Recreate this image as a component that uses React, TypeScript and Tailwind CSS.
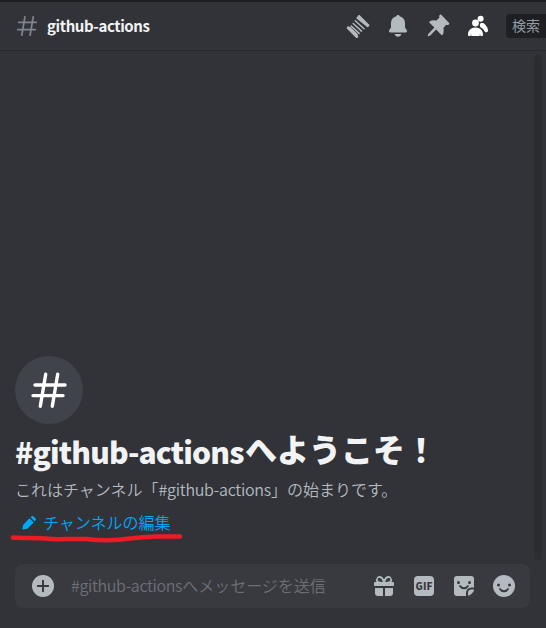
import React from "react";

const ICON = "#b5bac1";

function ThreadIcon() {
  return (
    <svg width="24" height="24" viewBox="0 0 24 24">
      <path d="M10.200 4.300 12 1.700c.4-.8 1.300-.9 2-.2l9 9c.7.700.6 1.600-.2 2l-1.400.800L10.200 4.300z" fill={ICON} />
      <path d="M1.100 13.100c.3-.7.700-.9 1.400-.6l2 .5 7.100 7.100.6 2.300c.2.600 0 1-.6 1.300-.7.400-1.300.3-1.900-.3L1.300 15c-.6-.6-.6-1.200-.2-1.900z" fill={ICON} />
      <path d="M9.300 6.700l8.700 8M7.200 9.500l8.300 7.600M5.100 12l8 7.400" stroke={ICON} strokeWidth="1.500" strokeLinecap="round" fill="none" />
    </svg>
  );
}

function BellIcon() {
  return (
    <svg width="24" height="24" viewBox="0 0 24 24" fill={ICON}>
      <path d="M12 1c-.9 0-1.500.6-1.700 1.300C6.900 3.200 5 5.800 5 9v4.500L3.300 16c-.7 1.100-.2 2.500 1.100 2.500h15.200c1.300 0 1.800-1.400 1.100-2.500L19 13.500V9c0-3.200-1.900-5.800-5.300-6.700C13.500 1.600 12.900 1 12 1z" />
      <path d="M9.200 20h5.600c.4 0 .6.300.4.700a3.600 3.600 0 0 1-6.400 0c-.2-.4 0-.7.4-.7z" />
    </svg>
  );
}

function PinIcon() {
  return (
    <svg width="24" height="24" viewBox="0 0 24 24" fill={ICON}>
      <path d="M13.700 1c.6-.6 1.300-.5 1.800.1l7.400 7.700c.6.500.6 1.200 0 1.700-.8.600-1.800.6-2.800.3l-2.700 3.200c.5 2.300.5 4.600-.6 6.500-.4.700-1.100.700-1.600.2L10.100 15.600l-5.600 5.700c-.6.5-1.800.9-2.300.9-.4 0-.5-.2-.4-.6.200-.8.500-1.700 1.100-2.300l5.500-5.700-4.700-4.700c-.5-.5-.5-1.200.1-1.600 1.900-1 4.200-1.200 6.200-.6l3.400-3c-.3-1-.3-2 .3-2.700z" />
    </svg>
  );
}

function MembersIcon() {
  return (
    <svg width="24" height="24" viewBox="0 0 24 24" fill="#fff">
      <circle cx="9.500" cy="9" r="3.400" />
      <path d="M2 20.500c0-4 3-7 7.500-7s7.500 3 7.500 7c0 1-.4 1.500-1.200 1.500h-1.300l-.6-2.200-.2 2.200H5.300l-.2-2.200L4.500 22H3.200c-.8 0-1.200-.5-1.200-1.500z" />
      <circle cx="14.600" cy="4.800" r="3" />
      <path d="M14.300 9.500c1.600-.8 3.400-.5 4.800 1 2 2.100 3.100 4.600 2.900 6.600-.2 1.300-1.700 1.200-3 .8-1-1.700-2.400-3.400-4.300-4.300-.8-.5-1.200-3.600-.4-4.100z" />
    </svg>
  );
}

function PlusIcon() {
  return (
    <svg width="24" height="24" viewBox="0 0 24 24">
      <circle cx="12" cy="12" r="11" fill={ICON} />
      <path d="M12 6.800v10.400M6.800 12h10.400" stroke="#383a40" strokeWidth="2" strokeLinecap="round" />
    </svg>
  );
}

function GiftIcon() {
  return (
    <svg width="24" height="24" viewBox="0 0 24 24" fill={ICON}>
      <path fillRule="evenodd" d="M4.500 8A3.700 3.700 0 0 1 5 3.500C7.500.7 10.500 2.500 12 5.500c1.500-3 4.500-4.800 7-2A3.700 3.700 0 0 1 19.500 8H21a1 1 0 0 1 1 1v2c0 .6-.4 1-1 1H3c-.6 0-1-.4-1-1V9a1 1 0 0 1 1-1zm6.300 0c-.4-2.100-2-4.400-3.600-4.200-1.700.2-2.200 2.600-.7 3.500.8.5 2.700.7 4.300.7zm2.400 0c1.600 0 3.500-.2 4.300-.7 1.500-.9 1-3.300-.7-3.500-1.600-.2-3.200 2.100-3.600 4.200z" />
      <path d="M3 14h8v8H6a3 3 0 0 1-3-3zM13 14h8v5a3 3 0 0 1-3 3h-5z" />
    </svg>
  );
}

function StickerIcon() {
  return (
    <svg width="24" height="24" viewBox="0 0 24 24" fill="none">
      <path d="M5 2h14a3 3 0 0 1 3 3v8.500h-2.500a5.500 5.500 0 0 0-5.500 5.500v3H5a3 3 0 0 1-3-3V5a3 3 0 0 1 3-3z" fill={ICON} />
      <path d="M16 21.500V19a3.500 3.500 0 0 1 3.500-3.500H22c0 1.300-.5 2.300-1.500 3.200L19 20.300c-.8.8-1.800 1.200-3 1.200z" fill={ICON} />
      <circle cx="6.500" cy="8.500" r="1.500" fill="#383a40" />
      <circle cx="17.500" cy="8.500" r="1.500" fill="#383a40" />
      <path d="M8 12c1.800 3 6.200 3 8 0" stroke="#383a40" strokeWidth="1.800" strokeLinecap="round" />
    </svg>
  );
}

function SmileIcon() {
  return (
    <svg width="24" height="24" viewBox="0 0 24 24" fill="none">
      <circle cx="12" cy="12" r="11" fill={ICON} />
      <circle cx="6.500" cy="11" r="1.500" fill="#383a40" />
      <circle cx="17.500" cy="11" r="1.500" fill="#383a40" />
      <path d="M8 15c1.800 3 6.200 3 8 0" stroke="#383a40" strokeWidth="1.800" strokeLinecap="round" />
    </svg>
  );
}

function PencilIcon() {
  return (
    <svg width="16" height="16" viewBox="0 0 16 16" fill="#00a8fc">
      <path d="M8.400 3.200 12.700 7.500 6.800 13.200c-.5.500-1 .8-1.700.9l-3 .5c-.5.1-.8-.2-.7-.7l.5-3c.1-.7.400-1.200.9-1.700z" />
      <path d="M9.600 2.200l.9-.9c.6-.6 1.500-.5 2.100.1l1.900 1.900c.6.600.7 1.400.1 2l-1 1z" />
    </svg>
  );
}

export default function App() {
  return (
    <div className="relative flex h-[628px] w-[546px] flex-col overflow-hidden border-t-2 border-[#1e1f22] bg-[#313338] font-['Noto_Sans_CJK_JP','Noto_Sans',sans-serif]">
      <header className="flex h-[49px] shrink-0 items-center border-b border-[#27292d] pl-[15px]">
        <svg className="shrink-0" width="24" height="24" viewBox="0 0 24 24" fill="none" stroke="#80848e" strokeWidth="1.800" strokeLinecap="round">
          <path d="M9.900 2.800 6.800 21.200M18.200 2.800 15.100 21.200M3.800 8.300h17.400M2.800 15.700h17.400" />
        </svg>
        <h1 className="ml-2 w-[200px] shrink-0 text-[15px] leading-6 font-bold tracking-[-0.4px] whitespace-nowrap text-[#f2f3f5]">github-actions</h1>
        <div className="ml-[99px] flex shrink-0 gap-4">
          <ThreadIcon />
          <BellIcon />
          <PinIcon />
          <MembersIcon />
        </div>
        <div className="ml-4 flex h-6 w-[60px] shrink-0 items-center rounded bg-[#1e1f22] pl-1.5 text-sm font-normal text-[#949ba4]">
          <span className="-mt-0.5">検索</span>
        </div>
      </header>

      <main className="flex min-h-0 flex-1">
        <div className="flex flex-1 flex-col pl-[15px]">
          <div className="mt-[305px] flex size-[68px] shrink-0 items-center justify-center rounded-full bg-[#41434a]">
            <svg width="44" height="44" viewBox="0 0 44 44" fill="none" stroke="#fff" strokeWidth="3.400" strokeLinecap="round">
              <path d="M18.700 6.200 13.300 38.200M30.700 6.200 25.300 38.200M8 17h30M6 27.600h30" />
            </svg>
          </div>
          <h2 className="mt-1 flex h-10 items-baseline text-[32px] leading-[44px] font-extrabold whitespace-nowrap text-[#f2f3f5]">
            <span className="w-[230px] shrink-0 text-[30px] tracking-[-0.85px]">#github-actions</span>
            <span className="mb-0.5 -translate-y-0.5">へようこそ！</span>
          </h2>
          <p className="mt-[11px] flex h-5 items-center text-base leading-5 font-[350] whitespace-nowrap text-[#b5bac1]">
            <span>これはチャンネル「</span>
            <span className="tracking-[-0.27px]">#github-actions</span>
            <span>」の始まりです。</span>
          </p>
          <div className="relative mt-2 flex h-8 items-center pl-1.5 text-base font-[350] text-[#00a8fc]">
            <PencilIcon />
            <span className="-mt-0.5 ml-[6px] whitespace-nowrap">チャンネルの編集</span>
            <svg className="absolute top-6 -left-[6px]" width="176" height="14" viewBox="0 0 176 14" fill="none">
              <path d="M4 6.500C14 7 25 7 37 7.500 46 9 60 7.500 77 8 86 9 98 10 112 8.500 125 6.500 137 6 146 5.500L171 5.500" stroke="#ed1c24" strokeWidth="4.500" strokeLinecap="round" strokeLinejoin="round" />
            </svg>
          </div>
          <div className="mt-[25px] flex h-11 w-[515px] items-center rounded-lg bg-[#383a40] pl-4">
            <PlusIcon />
            <div className="-mt-[3px] ml-4 flex w-[301px] shrink-0 text-base font-[350] whitespace-nowrap text-[#6d6f78]">
              <span className="tracking-[-0.35px]">#github-actions</span>
              <span>へメッセージを送信</span>
            </div>
            <div className="flex gap-4">
              <GiftIcon />
              <div className="flex size-6 items-center justify-center">
                <div className="flex size-5 items-center justify-center rounded bg-[#b5bac1] text-[10px] leading-none font-black text-[#383a40]">GIF</div>
              </div>
              <StickerIcon />
              <SmileIcon />
            </div>
          </div>
        </div>
        <div className="mt-[3px] mr-1 -ml-3 h-[506px] w-2 rounded bg-[#2b2d31]" />
      </main>
    </div>
  );
}
